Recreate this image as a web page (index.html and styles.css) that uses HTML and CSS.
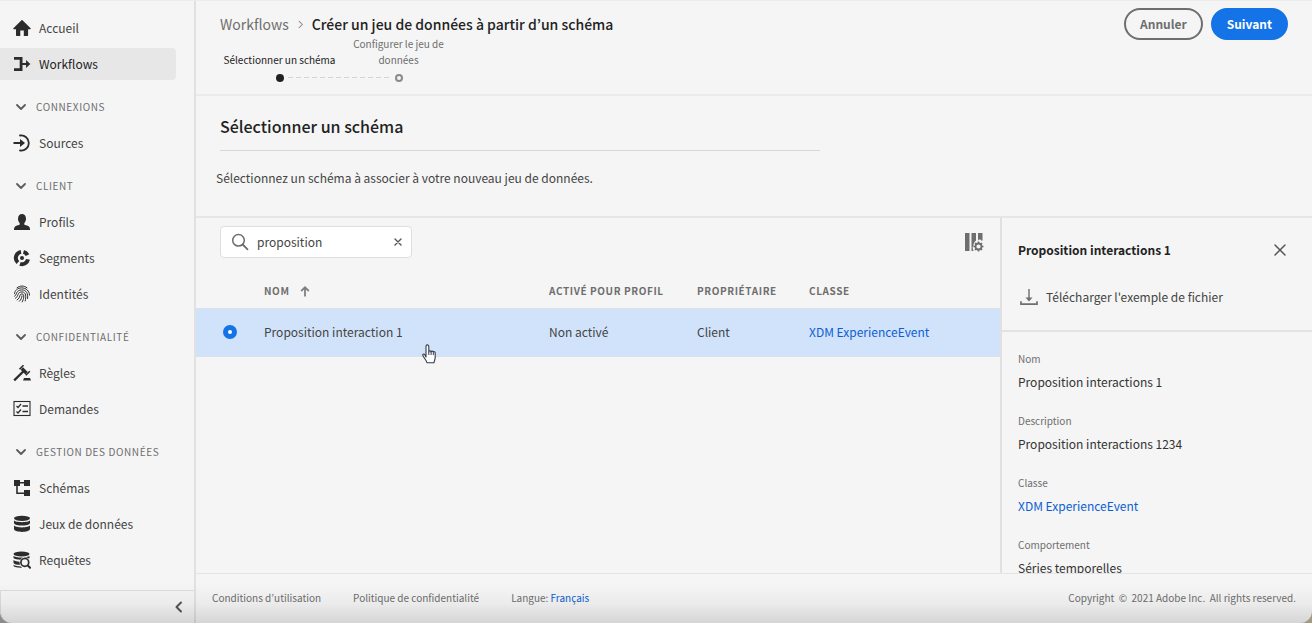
FILE: index.html
```html
<!DOCTYPE html>
<html lang="fr">
<head>
<meta charset="utf-8">
<meta name="viewport" content="width=device-width, initial-scale=1">
<title>Créer un jeu de données à partir d’un schéma</title>
<link rel="stylesheet" href="styles.css">
</head>
<body>
<svg class="defs" aria-hidden="true">
  <symbol id="chevron-down" viewBox="0 0 10 10"><path d="M1 3l4 4 4-4" fill="none" stroke="currentColor" stroke-width="1.8" stroke-linecap="round" stroke-linejoin="round"/></symbol>
</svg>
<div class="app">
  <aside class="sidebar">
    <nav class="nav">
      <div class="group">
        <a class="item" href="#"><svg class="icon" viewBox="0 0 18 18"><path d="M17.6 9.3L9.5 1.2a.7.7 0 0 0-1 0L.4 9.3c-.4.4-.1.9.3.9H3v6c0 .4.3.7.7.7h3.6v-5.5h3.5v5.5h3.6c.4 0 .7-.3.7-.7v-6h2.2c.4 0 .7-.5.3-.9z"/></svg>Accueil</a>
        <a class="item active" href="#" aria-current="page"><svg class="icon" viewBox="0 0 18 18"><path d="M1 2h8.500v5.900H13V5l4.300 4-4.300 4v-2.900H9.500V16H1v-2.800h5.700V4.800H1z"/></svg>Workflows</a>
      </div>
      <div class="group">
        <button class="heading" type="button"><svg class="chevron"><use href="#chevron-down"/></svg>CONNEXIONS</button>
        <a class="item" href="#"><svg class="icon" viewBox="0 0 18 18"><path d="M7 1.500A7.600 7.600 0 1 1 7 16.500" fill="none" stroke="currentColor" stroke-width="1.800" stroke-linecap="round"/><path d="M.5 8.100H7V5l5 4-5 4V9.900H.5z"/></svg>Sources</a>
      </div>
      <div class="group">
        <button class="heading" type="button"><svg class="chevron"><use href="#chevron-down"/></svg>CLIENT</button>
        <a class="item" href="#"><svg class="icon" viewBox="0 0 18 18"><path d="M11.300 11.200v-.8c0-.3.100-.5.300-.7.900-1.100 1.400-2.500 1.400-4C13 2.700 11.400 1 9 1S5 2.800 5 5.700c0 1.500.5 2.900 1.400 4 .2.200.3.400.3.700v.8c0 .4-.3.700-.7.800-3 .3-5 2-5 4v1h16v-1c0-2-2-3.700-5-4a.8.800 0 0 1-.7-.8z"/></svg>Profils</a>
        <a class="item" href="#"><svg class="icon" viewBox="0 0 18 18"><g fill="none" stroke="currentColor" stroke-width="4"><path d="M10.500 2.900A6.200 6.200 0 0 1 14.500 6.200"/><path d="M15 10.300A6.200 6.200 0 0 1 7 14.900"/><path d="M4.900 13.600A6.200 6.200 0 0 1 8 2.900"/></g><circle cx="9" cy="9" r="2"/></svg>Segments</a>
        <a class="item" href="#"><svg class="icon" viewBox="0 0 18 18"><g fill="none" stroke="currentColor" stroke-width="1" stroke-linecap="round"><path d="M4 2.800C7 .4 11 .4 14 2.800"/><path d="M1.500 8.500C1.800 5.300 4.600 3 8.600 2.900c4.500 0 7.900 3 7.900 7.200"/><path d="M1.700 11.200C4 10 2.600 5.200 8.800 4.900c4.600 0 6.400 3.500 5.800 8.600"/><path d="M2.500 13.200C6.300 11 3.600 7.200 9 6.900c4.200.2 4.300 4.800 3.200 9"/><path d="M4.100 14.900C8 12.600 5.800 9 9 8.900c3 .2 1.700 5.500.2 8"/><path d="M6.300 16.300C8 14.800 8.800 13 9 10.900"/></g></svg>Identités</a>
      </div>
      <div class="group">
        <button class="heading" type="button"><svg class="chevron"><use href="#chevron-down"/></svg>CONFIDENTIALITÉ</button>
        <a class="item" href="#"><svg class="icon" viewBox="0 0 18 18"><path d="M10 16.500l1-2.500h6l1 2.500z"/><g fill="none" stroke="currentColor"><path d="M1.200 16.400L11 6.700" stroke-width="2.300"/><path d="M8.800 4.600l4.800 4.600" stroke-width="3.400"/><path d="M6.500 5.200l4-4M12.800 11.300l4-4" stroke-width="1.600"/></g></svg>Règles</a>
        <a class="item" href="#"><svg class="icon" viewBox="0 0 18 18"><g fill="none" stroke="currentColor"><rect x="1" y="1.500" width="16" height="14" stroke-width="1.100"/><path d="M9.500 6H15M9.500 11.500H15" stroke-width="1.600"/><path d="M3.500 6l1.500 1.500 3-3.500M3.500 11.500L5 13l3-3.500" stroke-width="1.200"/></g></svg>Demandes</a>
      </div>
      <div class="group">
        <button class="heading" type="button"><svg class="chevron"><use href="#chevron-down"/></svg>GESTION DES DONNÉES</button>
        <a class="item" href="#"><svg class="icon" viewBox="0 0 18 18"><path d="M1 1h6v6H1zM11 1h6v6h-6zM11 11h6v6h-6z"/><path d="M7 3.800h4M4 7v7.200h7" fill="none" stroke="currentColor" stroke-width="1.600"/></svg>Schémas</a>
        <a class="item" href="#"><svg class="icon" viewBox="0 0 18 18"><ellipse cx="9" cy="3.300" rx="8" ry="2.600"/><path d="M1 5.300c1.200 2.500 14.800 2.500 16 0v2.900c-1.200 3.200-14.800 3.200-16 0zM1 10.300c1.200 2.800 14.800 2.800 16 0v4c-1.200 3.500-14.800 3.500-16 0z"/></svg>Jeux de données</a>
        <a class="item" href="#"><svg class="icon" viewBox="0 0 18 18"><ellipse cx="8.500" cy="2.900" rx="8" ry="2.500"/><path d="M.5 4.700c1.500 2.400 14.500 2.400 16 0v2.500l-1 .3C13 5.500 9 6 7.500 8.700c-3 0-6-.5-7-1.700zM.5 9c1.500 1.300 4 1.500 6 1.700 0 1.200.1 2 .6 3.100-3-.1-6-.6-6.600-1.900zM.5 13.800c1.500 1.300 4.500 1.700 7.500 1.700l1 1.200c-4 .2-7.500-.5-8.500-1.700z"/><g fill="none" stroke="currentColor" stroke-width="1.700"><circle cx="11.800" cy="11.400" r="3.900"/><path d="M14.600 14.200l3.100 3.200" stroke-width="2"/></g></svg>Requêtes</a>
      </div>
    </nav>
    <div class="collapse"><button type="button" aria-label="Réduire"><svg viewBox="0 0 10 12"><path d="M7 1.500L2.500 6 7 10.500" fill="none" stroke="currentColor" stroke-width="2" stroke-linecap="round" stroke-linejoin="round"/></svg></button></div>
  </aside>

  <main class="main">
    <header class="topbar">
      <div class="lead">
        <div class="crumbs"><a href="#">Workflows</a><svg viewBox="0 0 8 10"><path d="M2 1l4 4-4 4" fill="none" stroke="currentColor" stroke-width="1.200"/></svg><h1>Créer un jeu de données à partir d’un schéma</h1></div>
        <ol class="steps">
          <li class="current"><span>Sélectionner un schéma</span><i class="dot"></i></li>
          <li><span>Configurer le jeu de données</span><i class="dot"></i></li>
        </ol>
      </div>
      <div class="actions"><button class="cancel" type="button">Annuler</button><button class="next" type="button">Suivant</button></div>
    </header>

    <section class="intro">
      <h2>Sélectionner un schéma</h2>
      <p>Sélectionnez un schéma à associer à votre nouveau jeu de données.</p>
    </section>

    <div class="content">
      <section class="browser">
        <div class="tools">
          <div class="search">
            <svg class="lens" viewBox="0 0 18 18"><g fill="none" stroke="currentColor" stroke-width="1.500" stroke-linecap="round"><circle cx="7.500" cy="7.300" r="5.800"/><path d="M11.700 11.500l4.800 4.800" stroke-width="1.800"/></g></svg>
            <input type="text" value="proposition" aria-label="Rechercher">
            <button type="button" aria-label="Effacer"><svg viewBox="0 0 8 8"><path d="M1 1l6 6M7 1L1 7" stroke="currentColor" stroke-width="1.400" stroke-linecap="round"/></svg></button>
          </div>
          <button class="columns" type="button" aria-label="Configurer les colonnes"><svg viewBox="0 0 20 20"><path d="M1 1h4.500v18H1zM7.500 1H12v7.500c-2 1.500-2.600 3-2.500 5.500-.7.500-1.200 1.400-.7 2.400l.7 2.600h-2zM14 1h4.500v7.500l-1 .3-1-1.300h-1.500L14 8.600z"/><g fill="none" stroke="currentColor"><circle cx="14.500" cy="14.500" r="3" stroke-width="1.800"/><path d="M14.500 11.500V9.500M14.500 19.500v-2M11.500 14.500h-2M19.500 14.500h-2M12.400 12.400L11 11M18 18l-1.400-1.400M16.600 12.400L18 11M12.400 16.600L11 18" stroke-width="1.600"/></g></svg></button>
        </div>
        <table class="schemas">
          <thead><tr><th class="pick"></th><th class="name"><span>NOM</span><svg viewBox="0 0 10 11"><path d="M5 10.500V1.500M1.200 5L5 1.300 8.800 5" fill="none" stroke="currentColor" stroke-width="1.800"/></svg></th><th class="profile">ACTIVÉ POUR PROFIL</th><th class="owner">PROPRIÉTAIRE</th><th>CLASSE</th></tr></thead>
          <tbody><tr><td class="pick"><input type="radio" name="schema" id="schema-1" checked></td><td class="pointed"><label for="schema-1">Proposition interaction 1</label><svg class="pointer" viewBox="0 0 14 20"><path d="M4 13V2.300a1.400 1.400 0 0 1 2.800 0V8c0-1.600 2.200-1.500 2.300 0 .2-1.200 2-1.200 2.200.3.300-1 1.900-.9 1.900.7v4.300c0 2.500-1 3-1.200 5.400H5c-.2-2-2.500-3.800-4-6.900-.8-1.500.8-2.300 1.700-1.300z" fill="#fff" stroke="#333a49" stroke-width="1.100" stroke-linejoin="round"/><path d="M6.800 8v3M9.100 8v3M11.300 8.500V11" stroke="#333a49"/></svg></td><td>Non activé</td><td>Client</td><td><a href="#">XDM ExperienceEvent</a></td></tr></tbody>
        </table>
      </section>

      <aside class="details">
        <div class="summary">
          <div class="title"><h3>Proposition interactions 1</h3><button type="button" aria-label="Fermer"><svg viewBox="0 0 12 12"><path d="M1 1l10 10M11 1L1 11" stroke="currentColor" stroke-width="1.500" stroke-linecap="round"/></svg></button></div>
          <button class="download" type="button"><svg viewBox="0 0 18 18"><path d="M1 13.200v3h16v-3" fill="none" stroke="currentColor" stroke-width="1.700"/><path d="M8.300 1h1.400v8.500h2.800L9 13.500 5.500 9.500h2.800z"/></svg>Télécharger l'exemple de fichier</button>
        </div>
        <dl>
          <div><dt>Nom</dt><dd>Proposition interactions 1</dd></div>
          <div><dt>Description</dt><dd>Proposition interactions 1234</dd></div>
          <div><dt>Classe</dt><dd><a href="#">XDM ExperienceEvent</a></dd></div>
          <div><dt>Comportement</dt><dd>Séries temporelles</dd></div>
        </dl>
      </aside>
    </div>

    <footer class="footer">
      <a href="#">Conditions d’utilisation</a>
      <a href="#">Politique de confidentialité</a>
      <span>Langue: <a class="lang" href="#">Français</a></span>
      <span class="copy">Copyright &nbsp;© &nbsp;2021 Adobe Inc. &nbsp;All rights reserved.</span>
    </footer>
  </main>
</div>
</body>
</html>
```

FILE: styles.css
```css
* { box-sizing: border-box; }

html {
  background: linear-gradient(90deg, #8c8c8c 50%, #a39a80 50%);
}

body {
  margin: 0;
  color: #444;
  font: 12px/20px "Noto Sans CJK KR", "Noto Sans", sans-serif;
}

h1, h2, h3, p, ol, dl, dd { margin: 0; padding: 0; }

a { color: inherit; text-decoration: none; }

button {
  display: flex;
  align-items: center;
  padding: 0;
  border: 0;
  background: none;
  color: inherit;
  font: inherit;
  white-space: nowrap;
}

svg { display: block; flex: none; fill: currentColor; }
.defs { position: absolute; width: 0; height: 0; }

.app {
  position: relative;
  display: grid;
  grid-template-columns: 196px minmax(0, 1fr);
  height: 100vh;
  overflow: hidden;
  border-top: 1px solid #ececec;
  border-radius: 0 0 12px 12px;
  background: #f5f5f5;
}

.app::after {
  content: "";
  position: absolute;
  inset: auto 0 0;
  height: 40px;
  background: linear-gradient(rgba(0, 0, 0, 0), rgba(0, 0, 0, 0.04) 50%, rgba(0, 0, 0, 0.13));
  pointer-events: none;
}

.sidebar {
  display: flex;
  flex-direction: column;
  justify-content: space-between;
  min-height: 0;
  border-right: 2px solid #e1e1e1;
}

.nav {
  display: flex;
  flex-direction: column;
  gap: 11px;
  padding: 11px 18px 0 0;
}

.group { display: flex; flex-direction: column; gap: 4px; }

.item {
  display: flex;
  align-items: center;
  gap: 8px;
  height: 32px;
  padding-left: 13px;
  border-radius: 0 4px 4px 0;
}

.item.active { background: #e7e7e7; color: #222; }
.icon { width: 18px; height: 18px; color: #2c2c2c; }

.heading {
  gap: 10px;
  height: 32px;
  padding-left: 16px;
  color: #6e6e6e;
  font-size: 10px;
  letter-spacing: 0.06em;
}

.chevron { width: 10px; height: 10px; color: #5c5c5c; }

.collapse {
  display: flex;
  justify-content: flex-end;
  height: 33px;
  padding-right: 10px;
  border: solid #dcdcdc;
  border-width: 1px 0 0 1px;
  border-radius: 0 0 0 12px;
}

.collapse svg { width: 10px; height: 12px; color: #555; }

.main {
  display: grid;
  grid-template-rows: auto auto minmax(0, 1fr) auto;
  min-height: 0;
}

.topbar {
  display: flex;
  justify-content: space-between;
  padding: 7px 24px 12px;
  border-bottom: 2px solid #eaeaea;
}

.lead { padding-top: 4px; }

.crumbs {
  display: flex;
  align-items: center;
  gap: 8px;
  color: #6e6e6e;
  font-size: 14px;
  line-height: 24px;
}

.crumbs svg { width: 7px; height: 9px; color: #888; }
.crumbs h1 { color: #222; font-size: 14px; font-weight: 500; }

.steps {
  display: flex;
  align-items: flex-end;
  list-style: none;
  color: #6e6e6e;
  font-size: 10px;
  line-height: 16px;
  text-align: center;
}

.steps li {
  display: flex;
  flex-direction: column;
  align-items: center;
  gap: 6px;
  width: 119px;
}

.steps span { padding: 0 8px; }
.steps .current { color: #222; }
.steps .current span { padding: 0; white-space: nowrap; }

.dot {
  position: relative;
  width: 8px;
  height: 8px;
  border: 2px solid #8a8a8a;
  border-radius: 50%;
}

.current .dot { border-color: #222; background: #222; }

.current .dot::after {
  content: "";
  position: absolute;
  top: 1px;
  left: 10px;
  width: 104px;
  height: 1px;
  background: repeating-linear-gradient(90deg, #d5d5d5 0 5px, transparent 5px 8px);
}

.actions { display: flex; align-items: flex-start; gap: 8px; }

.actions button {
  justify-content: center;
  height: 32px;
  padding: 0 14px;
  border: 2px solid #6e6e6e;
  border-radius: 16px;
  color: #6e6e6e;
  font-weight: 700;
}

.actions .next { border-color: #1473e6; background: #1473e6; color: #fff; }

.intro { padding: 18px 20px 28px; border-bottom: 2px solid #e6e6e6; }

.intro h2 {
  max-width: 600px;
  margin-left: 4px;
  padding-bottom: 12px;
  border-bottom: 1px solid #d8d8d8;
  color: #222;
  font-size: 16px;
  font-weight: 500;
  line-height: 24px;
}

.intro p { padding-top: 17px; }

.content {
  display: grid;
  grid-template-columns: minmax(0, 1fr) 312px;
  min-height: 0;
}

.tools {
  display: flex;
  justify-content: space-between;
  align-items: center;
  padding: 8px 16px 0 24px;
}

.search {
  display: flex;
  align-items: center;
  gap: 8px;
  width: 192px;
  height: 32px;
  padding: 0 9px 0 10px;
  border: 1px solid #dedede;
  border-radius: 4px;
  background: #fff;
}

.search input {
  flex: 1;
  min-width: 0;
  padding: 0;
  border: 0;
  outline: 0;
  background: none;
  color: #444;
  font: inherit;
}

.lens { width: 18px; height: 18px; color: #6e6e6e; }
.search button svg { width: 8px; height: 8px; color: #555; }
.columns svg { width: 20px; height: 20px; color: #6e6e6e; }

.schemas {
  width: 100%;
  margin-top: 16px;
  border-collapse: collapse;
  table-layout: fixed;
}

th, td { padding: 0; text-align: left; }

th {
  height: 34px;
  color: #6e6e6e;
  font-size: 10px;
  font-weight: 700;
  letter-spacing: 0.06em;
}

.pick { width: 68px; }
th.name { width: 285px; }
.name span, .name svg { display: inline-block; vertical-align: middle; }
.name svg { width: 10px; height: 11px; margin-left: 10px; color: #808080; }
.profile { width: 148px; }
.owner { width: 112px; }

td {
  height: 48px;
  border: solid #dbe1ea;
  border-width: 1px 0;
  background: #d1e3fb;
}

td a, dd a { color: #0d5fd3; }

.pick input {
  display: block;
  width: 14px;
  height: 14px;
  margin: 0 0 0 27px;
  border: 5px solid #1473e6;
  border-radius: 50%;
  background: #fff;
  appearance: none;
}

.pointed { position: relative; }

.pointer {
  position: absolute;
  top: 35px;
  left: 158px;
  width: 14px;
  height: 20px;
}

.details {
  min-height: 0;
  overflow: hidden;
  border-left: 2px solid #e0e0e0;
}

.summary {
  display: flex;
  flex-direction: column;
  gap: 25px;
  height: 114px;
  padding: 20px 26px 0 16px;
  border-bottom: 2px solid #e2e2e2;
}

.title { display: flex; justify-content: space-between; }
.title h3 { color: #222; font-size: 12px; font-weight: 700; line-height: 24px; }
.title svg { width: 12px; height: 12px; color: #555; }
.download { gap: 8px; padding-left: 2px; }
.download svg { width: 18px; height: 18px; color: #6e6e6e; }

dl {
  display: flex;
  flex-direction: column;
  gap: 16px;
  padding: 16px;
}

dt { color: #6e6e6e; font-size: 10px; line-height: 22px; }
dd { color: #333; line-height: 24px; }

.footer {
  display: flex;
  gap: 32px;
  padding: 14px 16px 15px;
  border-top: 1px solid #e4e4e4;
  color: #6e6e6e;
  font-size: 10px;
}

.footer .lang { color: #0d5fd3; }
.footer .copy { margin-left: auto; }
```
